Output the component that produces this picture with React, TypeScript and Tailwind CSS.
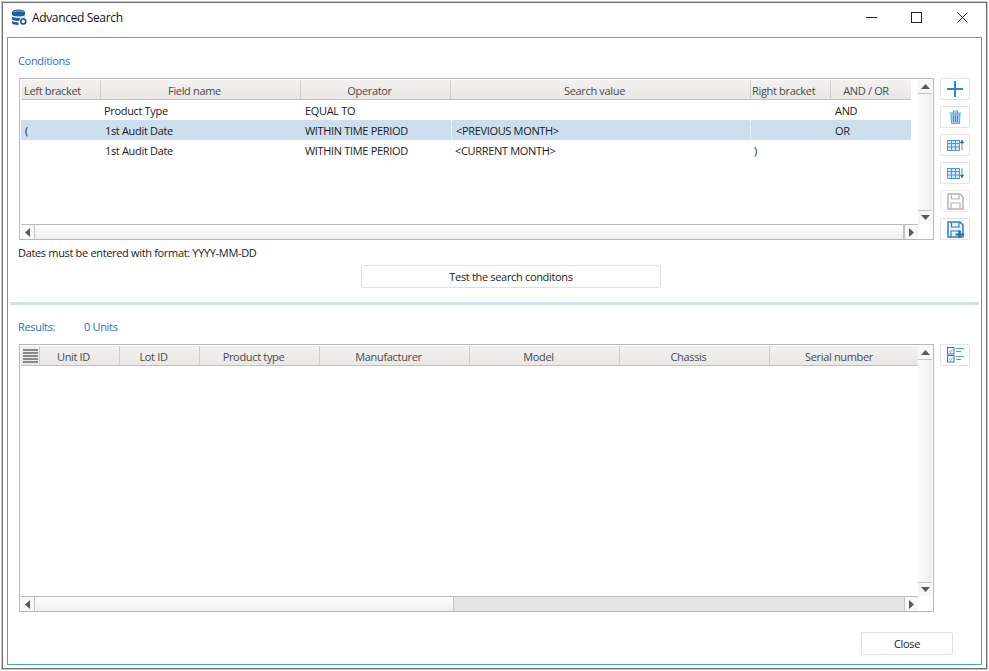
import type { ReactNode } from "react";

const conditionColumns = [
  { label: "Left bracket", width: "w-[80px]", align: "text-left pl-[3px]" },
  { label: "Field name", width: "w-[200px]", align: "text-center pr-[12px]" },
  { label: "Operator", width: "w-[150px]", align: "text-center pr-[12px]" },
  { label: "Search value", width: "w-[300px]", align: "text-center pr-[12px]" },
  { label: "Right bracket", width: "w-[80px]", align: "text-left pl-[1px]" },
  { label: "AND / OR", width: "w-[80px]", align: "text-center pr-[10px]", last: true },
];

const conditionRows = [
  { left: "", field: "Product Type", fieldPad: "pl-[3px]", op: "EQUAL TO", value: "", right: "", join: "AND" },
  { left: "(", field: "1st Audit Date", fieldPad: "pl-[4px]", op: "WITHIN TIME PERIOD", value: "<PREVIOUS MONTH>", right: "", join: "OR", selected: true },
  { left: "", field: "1st Audit Date", fieldPad: "pl-[4px]", op: "WITHIN TIME PERIOD", value: "<CURRENT MONTH>", right: ")", join: "" },
];

const resultColumns = [
  { label: "Unit ID", width: "w-[80px]" },
  { label: "Lot ID", width: "w-[80px]" },
  { label: "Product type", width: "w-[120px]" },
  { label: "Manufacturer", width: "w-[150px]" },
  { label: "Model", width: "w-[150px]" },
  { label: "Chassis", width: "w-[150px]" },
  { label: "Serial number", width: "w-[150px]" },
];

function Arrow({ dir }: { dir: "up" | "down" | "left" | "right" }) {
  const points = {
    up: "0,5 4.5,0 9,5",
    down: "0,0 9,0 4.5,5",
    left: "5,0 5,9 0,4.5",
    right: "0,0 5,4.5 0,9",
  }[dir];
  const vertical = dir === "up" || dir === "down";
  return (
    <svg width={vertical ? 9 : 5} height={vertical ? 5 : 9} viewBox={vertical ? "0 0 9 5" : "0 0 5 9"}>
      <polygon points={points} fill="#5a5a5a" />
    </svg>
  );
}

function VScroll() {
  return (
    <div className="flex h-full w-[14px] flex-col">
      <div className="flex h-[14px] items-center justify-center border-b border-[#c4c4c4] bg-[#f7f7f7]">
        <Arrow dir="up" />
      </div>
      <div className="flex-1 bg-gradient-to-r from-[#fcfcfc] to-[#efefef]" />
      <div className="flex h-[14px] items-center justify-center border-t border-[#c4c4c4] bg-[#f7f7f7]">
        <Arrow dir="down" />
      </div>
    </div>
  );
}

function HScroll({ thumb }: { thumb: string }) {
  return (
    <div className="flex h-[15px] border-t border-[#bdbdbd]">
      <div className="flex w-[14px] items-center justify-center border-r border-[#c4c4c4] bg-[#f7f7f7]">
        <Arrow dir="left" />
      </div>
      <div className="flex flex-1 bg-[#e5e5e5]">
        <div className={`${thumb} border-r border-[#c4c4c4] bg-gradient-to-b from-[#fcfcfc] to-[#f0f0f0]`} />
      </div>
      <div className="flex w-[14px] items-center justify-center border-l border-[#c4c4c4] bg-[#f7f7f7]">
        <Arrow dir="right" />
      </div>
    </div>
  );
}

function HeaderCell({ width, className = "", children, last }: { width: string; className?: string; children: ReactNode; last?: boolean }) {
  return (
    <div className={`${width} ${className} shrink-0 truncate pt-[1px] leading-[20px] text-[#4a4a4a] ${last ? "" : "border-r border-[#cfcdca]"}`}>
      {children}
    </div>
  );
}

function ToolButton({ children, faded }: { children: ReactNode; faded?: boolean }) {
  return (
    <button className={`flex h-[22px] w-[30px] items-center justify-center rounded-[2px] border ${faded ? "border-[#efefef]" : "border-[#e2e2e2]"} bg-white`}>
      {children}
    </button>
  );
}

function GridIcon({ down }: { down?: boolean }) {
  return (
    <svg width="17" height="12" viewBox="0 0 17 12" fill="none">
      <rect x="0.500" y="1.500" width="12" height="10" fill="#d6e7f6" stroke="#4f9ad8" />
      <path d="M0.500 4.500h12M0.500 8h12M4.500 1.500v10M8.500 1.500v10" stroke="#4f9ad8" />
      {down ? (
        <path d="M15 1v7M13.500 8h3L15 11z" stroke="#2f6fa8" fill="#2f6fa8" strokeWidth="0.800" />
      ) : (
        <path d="M15 11V4M13.500 4h3L15 1z" stroke="#2f6fa8" fill="#2f6fa8" strokeWidth="0.800" />
      )}
    </svg>
  );
}

function FloppyIcon({ color, plus }: { color: string; plus?: boolean }) {
  return (
    <svg width="17" height="17" viewBox="0 0 17 17" fill="none">
      <path d="M1 1h12l3 3v12H1z" stroke={color} strokeWidth="1.500" fill={plus ? "#eaf3fb" : "none"} />
      <path d="M4.500 1v5h7.500V1M4 16v-6h9v6" stroke={color} strokeWidth="1.200" />
      {plus && <path d="M12.500 9.500v7.500M8.500 13.500h8.500" stroke="#1f6fb8" strokeWidth="2.200" />}
    </svg>
  );
}

export default function App() {
  return (
    <div className="h-[671px] w-[989px] overflow-hidden bg-white font-['Open_Sans','Noto_Sans',sans-serif] text-[11px] tracking-[-0.33px] text-[#1a1a1a]">
      <div className="mx-[2px] mt-[2px] flex h-[667px] w-[985px] flex-col border border-[#6f6f6f] shadow-[0_0_0_1px_#c8c8c8]">
        {/* title bar */}
        <div className="flex h-[34px] shrink-0 items-center pb-[5px]">
          <svg className="ml-[8px]" width="17" height="17" viewBox="0 0 17 17" fill="none">
            <path d="M1 3.500C1 1.500 4 .5 7.500.5s6.500 1 6.500 3v2c0 1.200-3 2-6.500 2S1 6.700 1 5.500z" fill="#1d5f9c" />
            <path d="M3 3c1-.8 3-1.100 5-1.100s3.500.3 4.500 1" stroke="#9cc4e6" strokeWidth="0.900" />
            <path d="M1 7.500c1.200 1 3.500 1.400 6.500 1.400s5.300-.4 6.500-1.400v2.500c0 1.200-3 2-6.500 2S1 11.200 1 10z" fill="#1d5f9c" />
            <path d="M1 12c1.200 1 3.500 1.300 6.500 1.300V16C4 16 1 15.200 1 14z" fill="#1d5f9c" />
            <circle cx="12.300" cy="12.500" r="4.300" fill="#fff" />
            <circle cx="12.300" cy="12.500" r="2.500" stroke="#174f85" strokeWidth="1.500" />
          </svg>
          <span className="ml-[4px] text-[12px] tracking-[-0.35px] text-[#111]">Advanced Search</span>
          <div className="ml-auto flex items-center">
            <svg width="11" height="11" viewBox="0 0 11 11" className="mr-[34px]"><path d="M0 5.500h11" stroke="#222" /></svg>
            <svg width="11" height="11" viewBox="0 0 11 11" className="mr-[35px]"><rect x="0.500" y="0.500" width="10" height="10" fill="none" stroke="#222" /></svg>
            <svg width="11" height="11" viewBox="0 0 11 11" className="mr-[18px]"><path d="M.5.5l10 10M10.500.5l-10 10" stroke="#222" /></svg>
          </div>
        </div>

        {/* content frame */}
        <div className="mx-[4px] flex h-[628px] w-[975px] flex-col border border-[#41a3e0] px-[2px]">
          {/* conditions */}
          <div className="flex shrink-0 flex-col px-[9px]">
            <div className="-ml-[1px] mt-[16px] h-[14px] leading-[14px] text-[#1b74c4]">Conditions</div>
            <div className="mt-[10px] flex gap-[6px]">
              <div className="flex h-[162px] w-[915px] flex-col border border-[#b8b8b8] px-[1px] pt-[1px]">
                <div className="flex min-h-0 flex-1">
                  <div className="flex-1">
                    <div className="flex h-[20px] w-[890px] border-b border-[#c0c0c0] bg-gradient-to-b from-[#f3f2f0] to-[#e9e7e4]">
                      {conditionColumns.map((col) => (
                        <HeaderCell key={col.label} width={col.width} className={col.align} last={col.last}>
                          {col.label}
                        </HeaderCell>
                      ))}
                    </div>
                    {conditionRows.map((row) => (
                      <div key={row.field + row.op + row.join} className={`flex h-[20px] w-[890px] leading-[22px] ${row.selected ? "bg-[#cbdfef]" : ""}`}>
                        <div className="w-[80px] pl-[4px]">{row.left}</div>
                        <div className={`w-[200px] ${row.fieldPad}`}>{row.field}</div>
                        <div className="w-[150px] pl-[4px]">{row.op}</div>
                        <div className={`w-[300px] pl-[4px] ${row.selected ? "border-x border-dotted border-white" : ""}`}>{row.value}</div>
                        <div className="w-[80px] pl-[3px]">{row.right}</div>
                        <div className="w-[80px] pl-[4px]">{row.join}</div>
                      </div>
                    ))}
                  </div>
                  <VScroll />
                </div>
                <div className="w-[897px]">
                  <HScroll thumb="flex-1" />
                </div>
              </div>
              <div className="flex w-[30px] flex-col gap-[6px]">
                <ToolButton>
                  <svg width="18" height="18" viewBox="0 0 18 18"><path d="M9 1v16M1 9h16" stroke="#2f86d0" strokeWidth="2" /></svg>
                </ToolButton>
                <ToolButton>
                  <svg width="13" height="14" viewBox="0 0 13 14" fill="none">
                    <path d="M.5 3h12M4.500 3V1h4v2" stroke="#5ca2dc" strokeWidth="1.200" />
                    <path d="M2 4h9l-.5 9.500h-8z" fill="#a9cdec" stroke="#5ca2dc" />
                    <path d="M4.500 5.500v6.500M6.500 5.500v6.500M8.500 5.500v6.500" stroke="#3f86c6" />
                  </svg>
                </ToolButton>
                <ToolButton><GridIcon /></ToolButton>
                <ToolButton><GridIcon down /></ToolButton>
                <ToolButton faded><FloppyIcon color="#b4b4b4" /></ToolButton>
                <ToolButton><FloppyIcon color="#2f7fc6" plus /></ToolButton>
              </div>
            </div>
            <div className="-ml-[1px] mt-[6px] h-[14px] leading-[14px]">Dates must be entered with format: YYYY-MM-DD</div>
            <button className="ml-[342px] mt-[5px] h-[23px] w-[300px] rounded-[2px] border border-[#e0e0e0] bg-white pt-[1px] text-center">
              Test the search conditons
            </button>
          </div>

          <div className="mt-[14px] h-[3px] shrink-0 bg-[#cfe2f0]" />

          {/* results */}
          <div className="flex min-h-0 flex-1 flex-col px-[9px]">
            <div className="-ml-[1px] mt-[15px] flex h-[14px] leading-[14px] text-[#1b74c4]">
              <span className="w-[66px]">Results:</span>
              <span>0 Units</span>
            </div>
            <div className="mt-[10px] flex gap-[6px]">
              <div className="flex h-[268px] w-[915px] flex-col border border-[#b8b8b8] px-[1px] pt-[1px]">
                <div className="flex min-h-0 flex-1">
                  <div className="flex-1 overflow-hidden">
                    <div className="flex h-[20px] border-b border-[#c0c0c0] bg-gradient-to-b from-[#f3f2f0] to-[#e9e7e4]">
                      <div className="flex w-[19px] shrink-0 flex-col items-center justify-center gap-[1px] border-r border-[#cfcdca]">
                        {[0, 1, 2, 3, 4].map((i) => (
                          <span key={i} className="h-[2px] w-[15px] bg-[#8a8a8a]" />
                        ))}
                      </div>
                      {resultColumns.map((col, i) => (
                        <HeaderCell key={col.label} width={col.width} className="pr-[12px] text-center" last={i === resultColumns.length - 1}>
                          {col.label}
                        </HeaderCell>
                      ))}
                    </div>
                  </div>
                  <VScroll />
                </div>
                <div className="w-[897px]">
                  <HScroll thumb="w-[419px]" />
                </div>
              </div>
              <div className="w-[30px]">
                <ToolButton>
                  <svg width="17" height="16" viewBox="0 0 17 16" fill="none">
                    <rect x="0.500" y="0.500" width="6.500" height="6.500" fill="#eef5fb" stroke="#2f7fc6" />
                    <rect x="0.500" y="8.500" width="6.500" height="6.500" fill="#eef5fb" stroke="#2f7fc6" />
                    <path d="M2 4l1.500 1.500L5.500 2.500M2 12l1.500 1.500L5.500 10.500" stroke="#7d99b3" strokeWidth="0.800" />
                    <path d="M9 1.500h8M9 4.500h5M9 9.500h8M9 12.500h5" stroke="#4f9ad8" />
                  </svg>
                </ToolButton>
              </div>
            </div>
            <div className="mt-[20px] flex justify-end pr-[17px]">
              <button className="h-[23px] w-[92px] rounded-[2px] border border-[#e0e0e0] bg-white pt-[1px] text-center">Close</button>
            </div>
          </div>
        </div>
      </div>
    </div>
  );
}
